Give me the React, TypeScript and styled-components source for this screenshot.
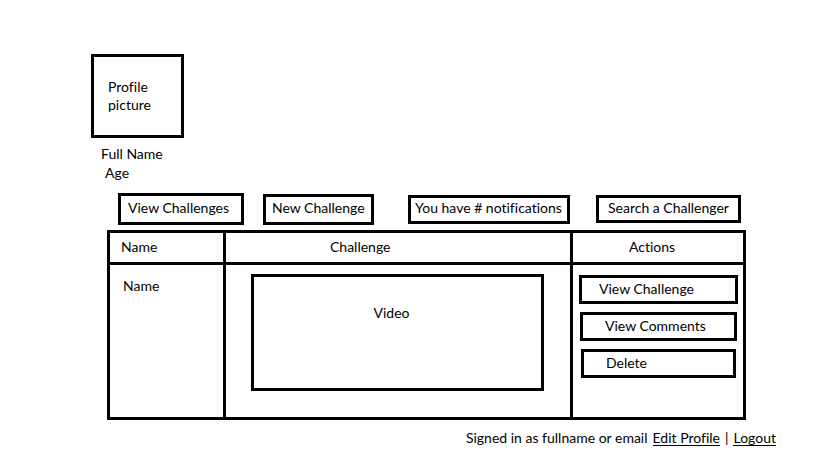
import React from "react";
import styled, { createGlobalStyle } from "styled-components";

const GlobalStyle = createGlobalStyle`
  *, *::before, *::after { box-sizing: border-box; }
  body {
    margin: 0;
    background: #fff;
    color: #000;
    font: 14px/18px Lato, "Open Sans", sans-serif;
    font-variant-ligatures: none;
  }
`;

const LINE = "3px solid #000";

const Page = styled.main`
  padding: 54px 43px 12px 91px;
`;

const Profile = styled.header`
  padding-bottom: 11px;
`;

const Picture = styled.div`
  width: 93px;
  height: 84px;
  padding: 21px 14px;
  border: ${LINE};
`;

const ProfileLine = styled.p<{ $indent: number }>`
  margin: 0;
  padding: 7px 0 0 ${(p) => p.$indent}px;

  & + & {
    padding-top: 1px;
  }
`;

const Content = styled.section`
  margin: 0 30px 0 16px;
`;

const BoxButton = styled.button<{ $inset: number }>`
  display: block;
  padding: 0 0 2px ${(p) => p.$inset}px;
  border: ${LINE};
  border-radius: 0;
  background: #fff;
  color: inherit;
  font: inherit;
  font-variant-ligatures: none;
  text-align: left;
  white-space: nowrap;
  cursor: pointer;
`;

const Nav = styled.nav`
  display: flex;
  align-items: center;
  height: 32px;
  margin: 0 5px 5px 11px;
`;

const NavButton = styled(BoxButton)<{ $share: number; $before: number; $height: number }>`
  flex: ${(p) => p.$share} 1 ${(p) => p.$share}px;
  height: ${(p) => p.$height}px;
  margin-left: ${(p) => p.$before}px;
`;

const Challenges = styled.table`
  width: 100%;
  table-layout: fixed;
  border: ${LINE};
  border-collapse: separate;
  border-spacing: 0;
`;

const NameCol = styled.col`
  width: 116px;
`;

const ActionsCol = styled.col`
  width: 170px;
`;

const HeadCell = styled.th<{ $inset: number }>`
  height: 32px;
  padding: 0 0 2px ${(p) => p.$inset}px;
  border-bottom: ${LINE};
  font-weight: 400;
  text-align: left;

  &:not(:last-child) {
    border-right: ${LINE};
  }
`;

const Cell = styled.td`
  height: 152px;
  padding: 0;
  vertical-align: top;

  &:not(:last-child) {
    border-right: ${LINE};
  }
`;

const ChallengerName = styled.div`
  padding: 12px 13px;
`;

const Video = styled.div`
  height: 117px;
  margin: 9px 26px 0 25px;
  padding: 27px 12px 0 0;
  border: ${LINE};
  text-align: center;
`;

const Actions = styled.div`
  display: grid;
  gap: 8px;
  padding: 10px 5px 0 6px;
`;

const ActionButton = styled(BoxButton)<{ $side: number }>`
  height: 29px;
  margin: 0 ${(p) => p.$side}px;
`;

const Account = styled.footer`
  display: flex;
  justify-content: flex-end;
  gap: 5px;
  padding-top: 9px;
`;

const AccountLink = styled.a`
  border-bottom: 1px solid #000;
  color: inherit;
  line-height: 18px;
  height: 17px;
  text-decoration: none;
`;

const navItems = [
  { label: "View Challenges", share: 126, before: 0, height: 32, inset: 7 },
  { label: "New Challenge", share: 111, before: 19, height: 31, inset: 6 },
  { label: "You have # notifications", share: 162, before: 34, height: 29, inset: 4 },
  { label: "Search a Challenger", share: 145, before: 26, height: 28, inset: 9 },
];

const actions = [
  { label: "View Challenge", side: 0, inset: 17 },
  { label: "View Comments", side: 1, inset: 22 },
  { label: "Delete", side: 2, inset: 22 },
];

export default function App() {
  return (
    <Page>
      <GlobalStyle />
      <Profile>
        <Picture>
          Profile
          <br />
          picture
        </Picture>
        <ProfileLine $indent={10}>Full Name</ProfileLine>
        <ProfileLine $indent={14}>Age</ProfileLine>
      </Profile>

      <Content>
        <Nav>
          {navItems.map((item) => (
            <NavButton
              key={item.label}
              type="button"
              $share={item.share}
              $before={item.before}
              $height={item.height}
              $inset={item.inset}
            >
              {item.label}
            </NavButton>
          ))}
        </Nav>

        <Challenges>
          <colgroup>
            <NameCol />
            <col />
            <ActionsCol />
          </colgroup>
          <thead>
            <tr>
              <HeadCell scope="col" $inset={11}>Name</HeadCell>
              <HeadCell scope="col" $inset={104}>Challenge</HeadCell>
              <HeadCell scope="col" $inset={56}>Actions</HeadCell>
            </tr>
          </thead>
          <tbody>
            <tr>
              <Cell>
                <ChallengerName>Name</ChallengerName>
              </Cell>
              <Cell>
                <Video>Video</Video>
              </Cell>
              <Cell>
                <Actions>
                  {actions.map((action) => (
                    <ActionButton
                      key={action.label}
                      type="button"
                      $side={action.side}
                      $inset={action.inset}
                    >
                      {action.label}
                    </ActionButton>
                  ))}
                </Actions>
              </Cell>
            </tr>
          </tbody>
        </Challenges>
      </Content>

      <Account>
        <span>Signed in as fullname or email</span>
        <AccountLink href="#edit-profile">Edit Profile</AccountLink>
        <span>|</span>
        <AccountLink href="#logout">Logout</AccountLink>
      </Account>
    </Page>
  );
}
